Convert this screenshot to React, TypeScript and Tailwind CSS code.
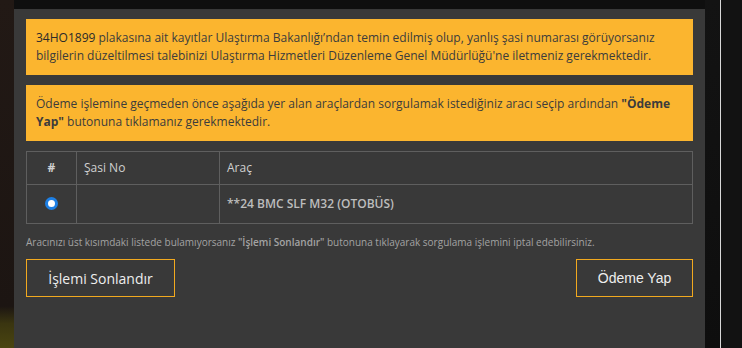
import { useState } from "react";

const App = () => {
  const [selected, setSelected] = useState(true);

  return (
    <main className="relative flex h-[348px] w-full overflow-hidden bg-[#0f0f0f] font-['Open_Sans',sans-serif]">
      {/* left strip of background photo */}
      <div className="h-full w-[14px] shrink-0 bg-[linear-gradient(180deg,#221915_0%,#1c1512_88%,#3a3510_93%,#4a4510_100%)]" />

      <section className="mt-[9px] w-[691px] shrink-0 bg-[#393939] px-[12px] pt-[10px]">
        <div className="bg-[#fbb52f] px-[10px] py-[10px] text-[12px] leading-[18px] text-[#3c3c3c]">
          <span className="text-[#2a2a2a]">34HO1899</span> plakasına ait kayıtlar Ulaştırma Bakanlığı’ndan temin
          edilmiş olup, yanlış şasi numarası görüyorsanız bilgilerin düzeltilmesi talebinizi Ulaştırma
          Hizmetleri Düzenleme Genel Müdürlüğü'ne iletmeniz gerekmektedir.
        </div>

        <div className="mt-[10px] bg-[#fbb52f] px-[10px] py-[10px] text-[12px] leading-[18px] text-[#3c3c3c]">
          Ödeme işlemine geçmeden önce aşağıda yer alan araçlardan sorgulamak istediğiniz aracı seçip
          ardından <b className="font-bold">"Ödeme Yap"</b> butonuna tıklamanız gerekmektedir.
        </div>

        <table className="mt-[10px] w-full border-collapse text-[12px] text-[#d0d0d0]">
          <thead>
            <tr className="h-[33px]">
              <th className="w-[50px] border border-[#5f5f5f] text-center font-bold">#</th>
              <th className="w-[143px] border border-[#5f5f5f] px-[7px] text-left font-normal">Şasi No</th>
              <th className="border border-[#5f5f5f] px-[7px] text-left font-normal">Araç</th>
            </tr>
          </thead>
          <tbody>
            <tr className="h-[39px]">
              <td className="border border-[#5f5f5f] text-center">
                <span
                  onClick={() => setSelected(!selected)}
                  className={
                    selected
                      ? "inline-block h-[13px] w-[13px] translate-y-[2px] rounded-full border-[3px] border-[#1d7fe4] bg-white"
                      : "inline-block h-[13px] w-[13px] translate-y-[2px] rounded-full border border-[#888] bg-white"
                  }
                />
              </td>
              <td className="border border-[#5f5f5f] px-[7px]"></td>
              <td className="border border-[#5f5f5f] px-[7px] font-semibold text-[#bdbdbd]">
                **24 BMC SLF M32 (OTOBÜS)
              </td>
            </tr>
          </tbody>
        </table>

        <p className="mt-[11px] text-[10px] leading-[14px] text-[#a3a3a3]">
          Aracınızı üst kısımdaki listede bulamıyorsanız <b className="font-semibold">"İşlemi Sonlandır"</b>{" "}
          butonuna tıklayarak sorgulama işlemini iptal edebilirsiniz.
        </p>

        <div className="mt-[10px] flex justify-between">
          <button className="h-[38px] w-[149px] border border-[#f2a91f] text-[14px] text-[#eeeeee]">
            İşlemi Sonlandır
          </button>
          <button className="h-[38px] w-[117px] border border-[#f2a91f] font-['Liberation_Sans',sans-serif] text-[14px] text-[#eeeeee]">
            Ödeme Yap
          </button>
        </div>
      </section>

      {/* right side of background photo */}
      <div className="flex h-full flex-1 bg-[linear-gradient(180deg,#131313_0%,#0e0e0e_100%)]">
        <div className="w-[15px]" />
        <div className="h-full w-px bg-[#d8d8d8]" />
        <div className="flex-1 bg-[#121212]" />
      </div>
    </main>
  );
};

export default App;
